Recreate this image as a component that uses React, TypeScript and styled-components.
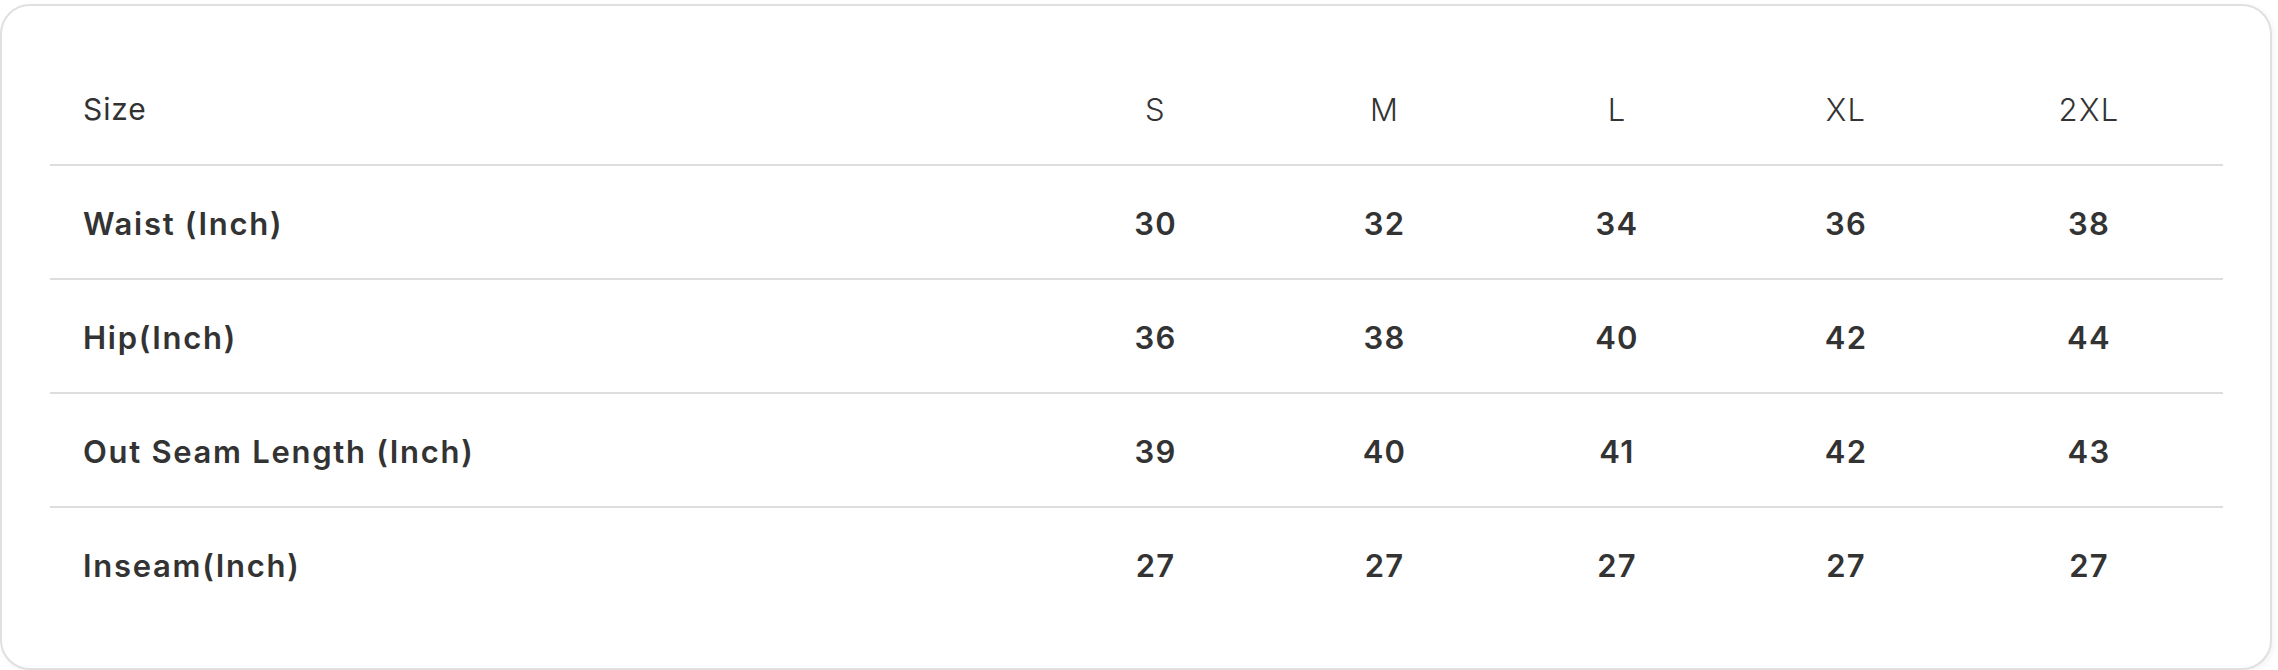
import styled, { createGlobalStyle } from "styled-components";

const sizes = ["S", "M", "L", "XL", "2XL"];

const rows = [
  { label: "Waist (Inch)", values: [30, 32, 34, 36, 38] },
  { label: "Hip(Inch)", values: [36, 38, 40, 42, 44] },
  { label: "Out Seam Length (Inch)", values: [39, 40, 41, 42, 43] },
  { label: "Inseam(Inch)", values: [27, 27, 27, 27, 27] },
];

const App = () => {
  return (
    <>
      <GlobalStyle />
      <PageStyled>
        <CardStyled>
          <TableStyled>
            <RowStyled $isHead>
              <LabelCellStyled $isHead>Size</LabelCellStyled>
              {sizes.map((size) => (
                <ValueCellStyled key={size} $isHead>
                  {size}
                </ValueCellStyled>
              ))}
            </RowStyled>
            {rows.map((row, idx) => (
              <RowStyled key={row.label} $isLast={idx === rows.length - 1}>
                <LabelCellStyled>{row.label}</LabelCellStyled>
                {row.values.map((value, i) => (
                  <ValueCellStyled key={i}>{value}</ValueCellStyled>
                ))}
              </RowStyled>
            ))}
          </TableStyled>
        </CardStyled>
      </PageStyled>
    </>
  );
};

export default App;

const GlobalStyle = createGlobalStyle`
  html, body {
    margin: 0;
    padding: 0;
    background: #ffffff;
  }
  * {
    box-sizing: border-box;
  }
`;

const PageStyled = styled.div`
  width: 2278px;
  height: 670px;
  padding: 4px 6px 0 0;
  overflow: hidden;
  font-family: "Inter", "Liberation Sans", sans-serif;
  color: #333333;
`;

const CardStyled = styled.div`
  width: 2272px;
  height: 666px;
  background-color: #ffffff;
  border: 2px solid #e0e0e0;
  border-radius: 30px;
  box-shadow: 2px 2px 6px rgba(0, 0, 0, 0.05);
  padding: 46px 47px 0 48px;
`;

const TableStyled = styled.div`
  display: flex;
  flex-direction: column;
`;

const RowStyled = styled.div<{ $isHead?: boolean; $isLast?: boolean }>`
  display: grid;
  grid-template-columns: 990px 231px 227px 238px 220px 266px;
  align-items: center;
  height: 114px;
  border-bottom: 2px solid
    ${({ $isLast }) => ($isLast ? "transparent" : "#dddddd")};
`;

const LabelCellStyled = styled.div<{ $isHead?: boolean }>`
  padding-left: 33px;
  padding-top: 2px;
  font-size: ${({ $isHead }) => ($isHead ? "30px" : "31px")};
  font-weight: ${({ $isHead }) => ($isHead ? 400 : 600)};
  letter-spacing: ${({ $isHead }) => ($isHead ? "0.03em" : "0.055em")};
  white-space: nowrap;
`;

const ValueCellStyled = styled.div<{ $isHead?: boolean }>`
  text-align: center;
  padding-top: 2px;
  font-size: 31px;
  font-weight: ${({ $isHead }) => ($isHead ? 300 : 600)};
  letter-spacing: 0.04em;
  white-space: nowrap;
`;
